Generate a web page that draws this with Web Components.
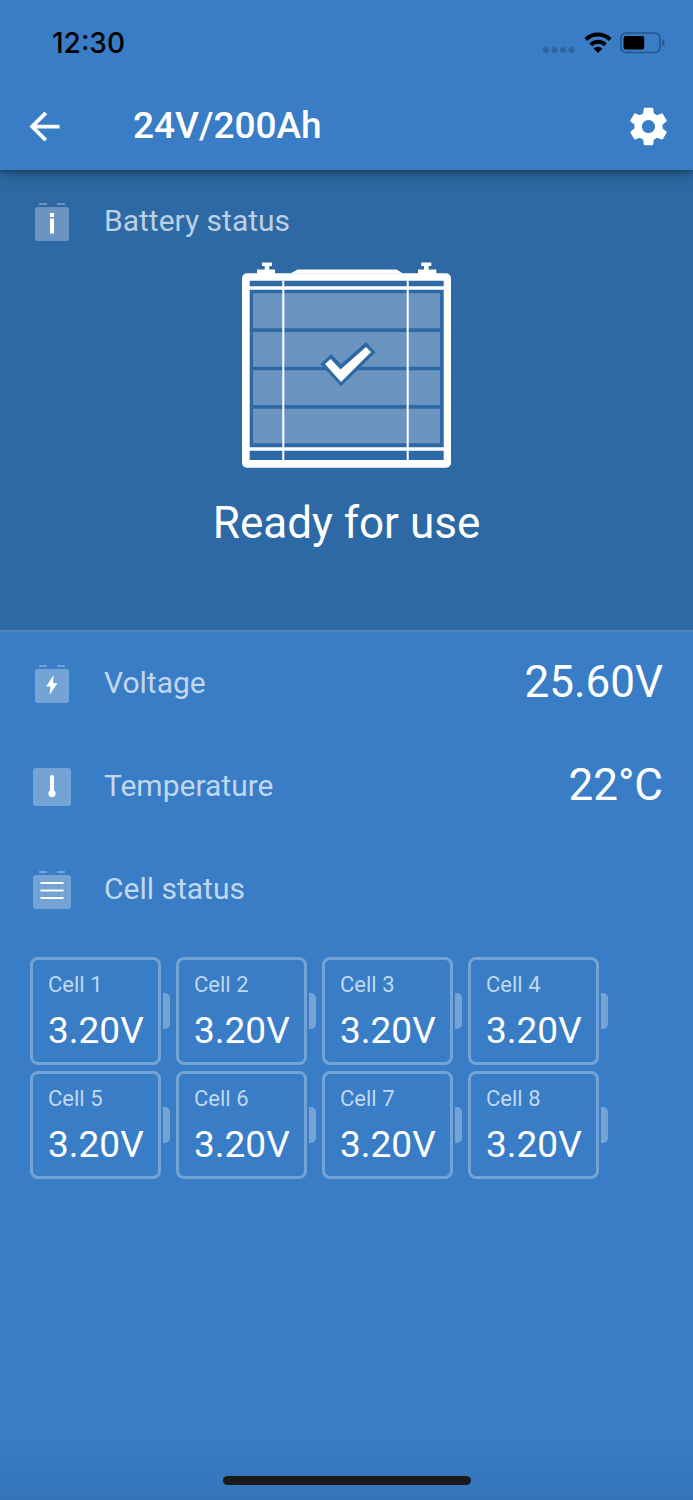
<!DOCTYPE html>
<html lang="en">
<head>
<meta charset="utf-8">
<meta name="viewport" content="width=device-width, initial-scale=1">
<title>24V/200Ah</title>
<style>
    body {
        margin: 0;
        background: #387dc6;
        color: #fff;
        font-family: Roboto, "Liberation Sans", sans-serif;
    }
</style>
</head>
<body>
<battery-app></battery-app>

<script>
class StatusBar extends HTMLElement {
    constructor() {
        super();
        const shadowRoot = this.attachShadow({ mode: 'open' });
        shadowRoot.innerHTML = `
            <style>
                :host {
                    display: flex;
                    align-items: center;
                    justify-content: space-between;
                    height: 82px;
                    padding: 4px 28px 0 52px;
                    box-sizing: border-box;
                    color: #000;
                    font: 500 28px/32px Inter, sans-serif;
                }
                .icons {
                    display: flex;
                    align-items: center;
                    gap: 8px;
                }
                svg { display: block; }
            </style>
            <slot></slot>
            <div class="icons">
                <svg width="34" height="22" viewBox="0 0 34 22" fill="#2e64a0" aria-hidden="true">
                    <circle cx="4" cy="18" r="3"/><circle cx="12.5" cy="18" r="3"/>
                    <circle cx="21" cy="18" r="3"/><circle cx="29.5" cy="18" r="3"/>
                </svg>
                <svg width="28" height="22" viewBox="0 0 28 22" fill="none" stroke="#000" stroke-width="4" aria-label="Wi-Fi">
                    <path d="M1.900 7.500a17.300 17.300 0 0 1 24.200 0"/>
                    <path d="M6.700 12.800a10.400 10.400 0 0 1 14.600 0"/>
                    <path d="M14 21l-4.400-4.400a6.300 6.300 0 0 1 8.800 0z" fill="#000" stroke="none"/>
                </svg>
                <svg width="45" height="22" viewBox="0 0 45 22" aria-label="Battery">
                    <rect x="1" y="1" width="39" height="19.500" rx="5" fill="none" stroke="#265687" stroke-width="1.600"/>
                    <rect x="3.600" y="4" width="20.600" height="13.400" rx="2" fill="#000"/>
                    <path d="M42.400 7.500c3 1 3 5.500 0 6.500z" fill="#265687"/>
                </svg>
            </div>
        `;
    }
}
customElements.define('status-bar', StatusBar);

class AppBar extends HTMLElement {
    constructor() {
        super();
        const shadowRoot = this.attachShadow({ mode: 'open' });
        shadowRoot.innerHTML = `
            <style>
                :host {
                    display: block;
                    position: relative;
                    background: #387dc6;
                    box-shadow: 0 2px 14px rgba(0,0,0,0.4), 0 1px 4px rgba(0,0,0,0.3);
                }
                .bar {
                    display: flex;
                    align-items: center;
                    height: 88px;
                    padding: 0 22px;
                }
                h1 {
                    flex: 1;
                    margin: 0;
                    padding-left: 66px;
                    font-size: 37px;
                    line-height: 44px;
                    font-weight: 500;
                }
                button {
                    padding: 0;
                    border: 0;
                    background: none;
                    color: inherit;
                    cursor: pointer;
                }
                svg {
                    display: block;
                    width: 45px;
                    height: 45px;
                    fill: currentColor;
                }
            </style>
            <status-bar>12:30</status-bar>
            <div class="bar">
                <button type="button" aria-label="Back">
                    <svg viewBox="0 0 24 24"><path d="M20 11H7.830l5.590-5.590L12 4l-8 8 8 8 1.410-1.410L7.830 13H20v-2z"/></svg>
                </button>
                <h1><slot></slot></h1>
                <button type="button" aria-label="Settings">
                    <svg viewBox="0 0 24 24"><path d="M19.430 12.980c.04-.32.07-.64.07-.98s-.03-.66-.07-.98l2.110-1.650c.19-.15.24-.42.12-.64l-2-3.460c-.12-.22-.39-.3-.61-.22l-2.490 1c-.52-.4-1.080-.73-1.690-.98l-.38-2.650C14.460 2.180 14.250 2 14 2h-4c-.25 0-.46.18-.49.42l-.38 2.650c-.61.25-1.170.59-1.690.98l-2.490-1c-.23-.09-.49 0-.61.22l-2 3.460c-.13.22-.07.49.12.64l2.110 1.650c-.04.32-.07.65-.07.98s.03.66.07.98l-2.110 1.650c-.19.15-.24.42-.12.64l2 3.460c.12.22.39.3.61.22l2.490-1c.52.4 1.080.73 1.690.98l.38 2.650c.03.24.24.42.49.42h4c.25 0 .46-.18.49-.42l.38-2.650c.61-.25 1.170-.59 1.690-.98l2.490 1c.23.09.49 0 .61-.22l2-3.460c.12-.22.07-.49-.12-.64l-2.110-1.650zM12 15.500c-1.930 0-3.500-1.570-3.500-3.500s1.570-3.500 3.500-3.500 3.500 1.570 3.500 3.500-1.570 3.500-3.500 3.500z"/></svg>
                </button>
            </div>
        `;
    }
}
customElements.define('app-bar', AppBar);

const terminals = '<path class="base" d="M6 0h8v2H6zM24 0h8v2h-8z"/>';
const rowIcons = {
    info: `${terminals}
        <rect class="base" x="2" y="4" width="34" height="34" rx="3"/>
        <path d="M17 10h4v4h-4zM17 15.500h4v15h-4z"/>`,
    bolt: `${terminals}
        <rect class="base" x="2" y="4" width="34" height="34" rx="3"/>
        <path d="M20.500 10L13.300 21.500h4.200L16.500 30 24.500 18h-4.500z"/>`,
    thermometer: `
        <rect class="base" x="0" y="0" width="38" height="38" rx="3"/>
        <path d="M17 9a2 2 0 0 1 4 0v13.500a3.700 3.700 0 1 1-4 0z"/>`,
    list: `${terminals}
        <rect class="base" x="0" y="4" width="38" height="34" rx="3"/>
        <path d="M7.500 11h23v2h-23zM7.500 18.500h23v2h-23zM7.500 26h23v2h-23z"/>`
};

class InfoRow extends HTMLElement {
    constructor() {
        super();
        const shadowRoot = this.attachShadow({ mode: 'open' });
        const icon = rowIcons[this.getAttribute('icon')];
        shadowRoot.innerHTML = `
            <style>
                :host {
                    display: flex;
                    align-items: center;
                    gap: 33px;
                    min-height: var(--row-height, 103px);
                    padding: 0 30px 0 33px;
                    box-sizing: border-box;
                }
                svg {
                    flex: none;
                    width: 38px;
                    height: 38px;
                    fill: #fff;
                }
                .base { fill: var(--tint, #74a3d6); }
                .label {
                    flex: 1;
                    padding-bottom: 2px;
                    color: var(--label, #c1d7ee);
                    font-size: 30px;
                    line-height: 36px;
                }
                .value {
                    padding-bottom: 4px;
                    font-size: 44px;
                    line-height: 52px;
                }
            </style>
            <svg viewBox="0 0 38 38" aria-hidden="true">${icon}</svg>
            <div class="label"><slot></slot></div>
            <div class="value"><slot name="value"></slot></div>
        `;
    }
}
customElements.define('info-row', InfoRow);

class BatteryHero extends HTMLElement {
    constructor() {
        super();
        const shadowRoot = this.attachShadow({ mode: 'open' });
        shadowRoot.innerHTML = `
            <style>
                :host {
                    --row-height: 76px;
                    --tint: #6b95c0;
                    --label: #bdd0e3;
                    display: block;
                    padding: 14px 0 81px;
                    border-bottom: 2px solid #5283b7;
                    background: #2d69a4;
                }
                svg {
                    display: block;
                    width: 209px;
                    height: 206px;
                    margin: 2px auto 29px;
                    fill: #fff;
                }
                .dark { fill: #2d69a4; }
                .fill { fill: #6b95c0; }
                p {
                    margin: 0;
                    font-size: 44px;
                    line-height: 52px;
                    text-align: center;
                }
            </style>
            <info-row icon="info"><slot name="label"></slot></info-row>
            <svg viewBox="0 0 209 206" aria-hidden="true">
                <path d="M20 .5h10v3.500h-2.700v3.500H33V12H15V7.500h7.700V4H20zM179.300.5h10v3.500h-2.600v3.500h7.600V12H176V7.500h6V4h-2.700z"/>
                <path d="M48.500 11.500l7-4h99l6.500 4z"/>
                <rect y="11.300" width="209" height="194.400" rx="5"/>
                <path class="dark" d="M7.700 18.700h194v5.600h-194zM7.700 27.700h194v157.600h-194zM7.700 188.700h194v9.300h-194z"/>
                <path class="fill" d="M11 31.300h187v35H11zM11 70h187v34.700H11zM11 108.300h187V143H11zM11 146.700h187v34.600H11z"/>
                <path d="M40.300 18.700h2V198h-2zM164.700 18.700h2V198h-2z"/>
                <path class="dark" d="M78.300 102l11-10 9.700 10.300L124 80l9.700 10.300-34.700 34z"/>
                <path d="M83 102l5.700-5 9.800 10.500L124 85l5 5-30 30z"/>
            </svg>
            <p><slot></slot></p>
        `;
    }
}
customElements.define('battery-hero', BatteryHero);

class BatteryCell extends HTMLElement {
    constructor() {
        super();
        const shadowRoot = this.attachShadow({ mode: 'open' });
        shadowRoot.innerHTML = `
            <style>
                :host {
                    display: flex;
                    align-items: center;
                    gap: 2px;
                }
                .box {
                    width: 131px;
                    padding: 12px 0 9px 15px;
                    border: 3px solid #74a3d6;
                    border-radius: 8px;
                    box-sizing: border-box;
                }
                .nub {
                    width: 7px;
                    height: 36px;
                    border-radius: 0 5px 5px 0;
                    background: #74a3d6;
                }
                .name {
                    padding-bottom: 11px;
                    color: #c1d7ee;
                    font-size: 22px;
                    line-height: 26px;
                }
                .volts {
                    font-size: 37px;
                    line-height: 44px;
                }
            </style>
            <div class="box">
                <div class="name"><slot></slot></div>
                <div class="volts"><slot name="volts"></slot></div>
            </div>
            <div class="nub"></div>
        `;
    }
}
customElements.define('battery-cell', BatteryCell);

class BatteryApp extends HTMLElement {
    constructor() {
        super();
        const shadowRoot = this.attachShadow({ mode: 'open' });

        let cells = '';
        for (let i = 1; i <= 8; i++) {
            cells += `<battery-cell>Cell ${i}<span slot="volts">3.20V</span></battery-cell>`;
        }

        shadowRoot.innerHTML = `
            <style>
                :host {
                    display: flex;
                    flex-direction: column;
                    min-height: 100vh;
                }
                app-bar { z-index: 1; }
                .cells {
                    display: flex;
                    flex-wrap: wrap;
                    gap: 6px;
                    padding: 16px 30px;
                }
                footer {
                    display: flex;
                    align-items: flex-end;
                    justify-content: center;
                    height: 60px;
                    margin-top: auto;
                    padding-bottom: 15px;
                    box-sizing: border-box;
                    background: linear-gradient(#387dc6, #3474b9);
                }
                .home {
                    width: 248px;
                    height: 9px;
                    border-radius: 5px;
                    background: #1a1a1a;
                }
            </style>
            <app-bar>24V/200Ah</app-bar>
            <main>
                <battery-hero><span slot="label">Battery status</span>Ready for use</battery-hero>
                <info-row icon="bolt">Voltage<span slot="value">25.60V</span></info-row>
                <info-row icon="thermometer">Temperature<span slot="value">22°C</span></info-row>
                <info-row icon="list">Cell status</info-row>
                <div class="cells">${cells}</div>
            </main>
            <footer><div class="home"></div></footer>
        `;
    }
}
customElements.define('battery-app', BatteryApp);
</script>
</body>
</html>
